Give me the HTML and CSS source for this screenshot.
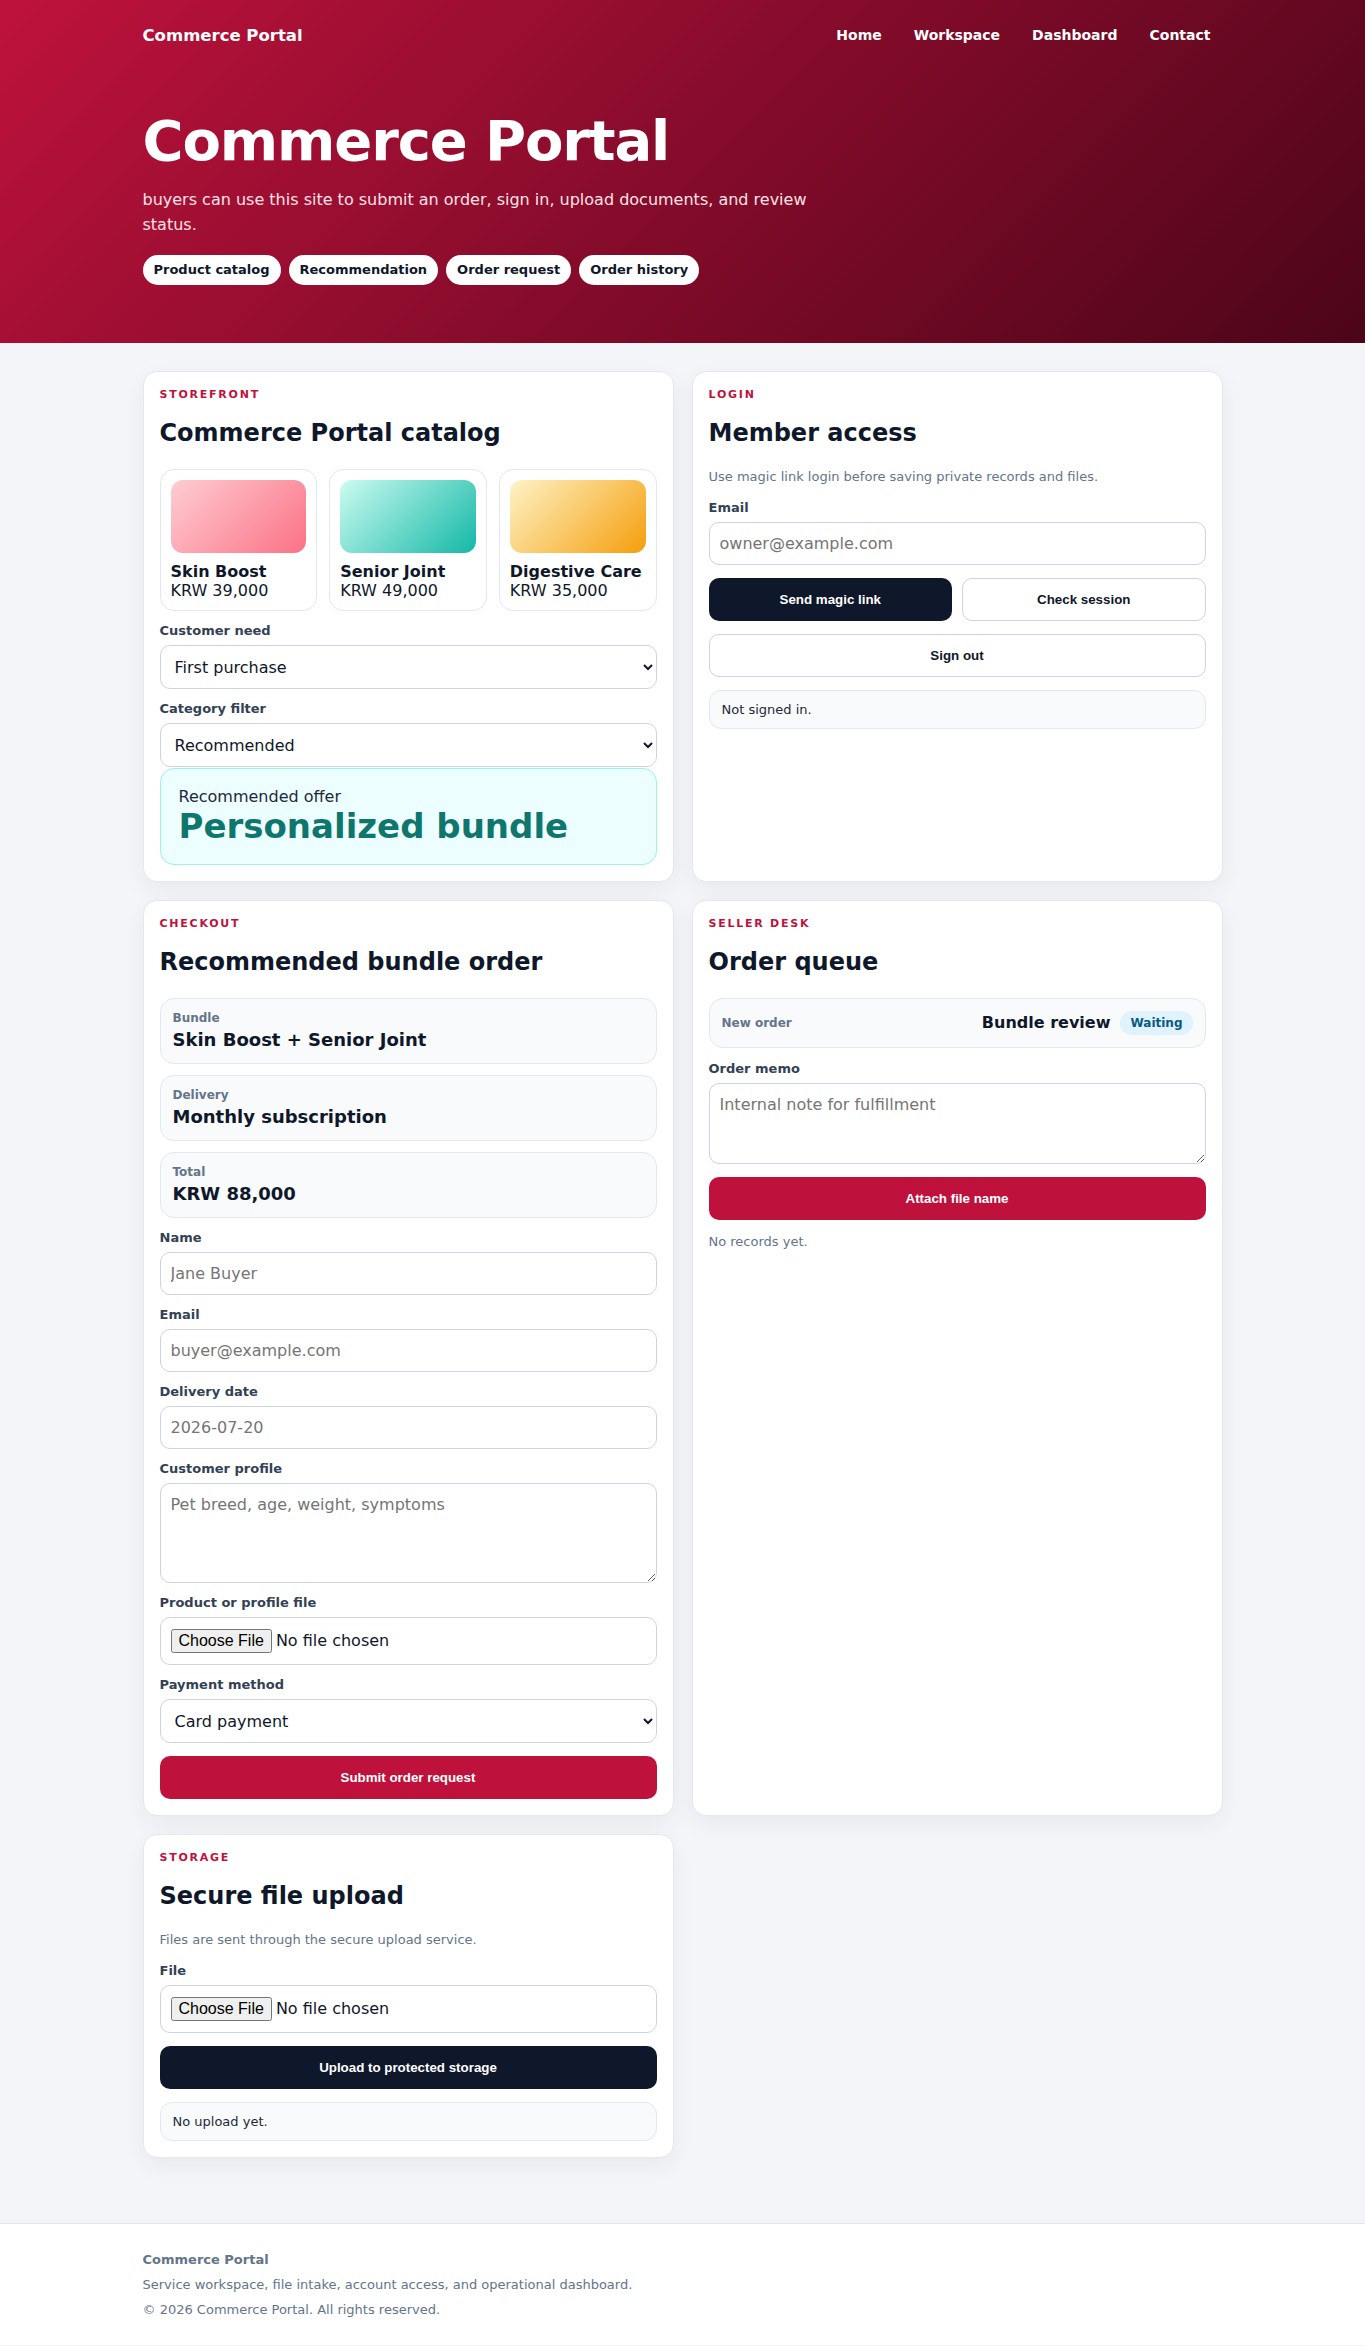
FILE: index.html
```html
<!DOCTYPE html>
<html lang="en">
<head>
    <meta charset="UTF-8">
    <meta name="viewport" content="width=device-width, initial-scale=1.0">
    <title>Commerce Portal</title>
    <link rel="stylesheet" href="styles.css">
</head>
<body>
    <header class="site-header">
        <div class="wrap topbar">
            <a class="brand" href="#">Commerce Portal</a>
            <nav class="nav">
                <a href="#">Home</a>
                <a href="#">Workspace</a>
                <a href="#">Dashboard</a>
                <a href="#">Contact</a>
            </nav>
        </div>
        <div class="wrap hero">
            <h1>Commerce Portal</h1>
            <p class="lead">buyers can use this site to submit an order, sign in, upload documents, and review status.</p>
            <div class="chips">
                <span class="chip">Product catalog</span>
                <span class="chip">Recommendation</span>
                <span class="chip">Order request</span>
                <span class="chip">Order history</span>
            </div>
        </div>
    </header>

    <main class="wrap grid">
        <!-- catalog -->
        <section class="card">
            <p class="eyebrow">Storefront</p>
            <h2>Commerce Portal catalog</h2>
            <div class="products">
                <div class="product">
                    <div class="swatch swatch-rose"></div>
                    <strong>Skin Boost</strong>
                    <span>KRW 39,000</span>
                </div>
                <div class="product">
                    <div class="swatch swatch-teal"></div>
                    <strong>Senior Joint</strong>
                    <span>KRW 49,000</span>
                </div>
                <div class="product">
                    <div class="swatch swatch-amber"></div>
                    <strong>Digestive Care</strong>
                    <span>KRW 35,000</span>
                </div>
            </div>
            <label class="field-label" for="need">Customer need</label>
            <select id="need">
                <option>First purchase</option>
                <option>Repeat order</option>
            </select>
            <label class="field-label" for="category">Category filter</label>
            <select id="category">
                <option>Recommended</option>
                <option>All products</option>
            </select>
            <div class="offer">
                <p class="offer-label">Recommended offer</p>
                <p class="offer-name">Personalized bundle</p>
            </div>
        </section>

        <!-- login -->
        <section class="card">
            <p class="eyebrow">Login</p>
            <h2>Member access</h2>
            <p class="hint">Use magic link login before saving private records and files.</p>
            <label class="field-label" for="loginEmail">Email</label>
            <input type="email" id="loginEmail" placeholder="owner@example.com">
            <div class="btn-row">
                <button class="btn btn-dark">Send magic link</button>
                <button class="btn btn-outline">Check session</button>
            </div>
            <button class="btn btn-outline btn-stack">Sign out</button>
            <div class="status">Not signed in.</div>
        </section>

        <!-- checkout -->
        <section class="card">
            <p class="eyebrow">Checkout</p>
            <h2>Recommended bundle order</h2>
            <div class="summary">
                <span>Bundle</span>
                <strong>Skin Boost + Senior Joint</strong>
            </div>
            <div class="summary">
                <span>Delivery</span>
                <strong>Monthly subscription</strong>
            </div>
            <div class="summary">
                <span>Total</span>
                <strong>KRW 88,000</strong>
            </div>
            <label class="field-label" for="buyerName">Name</label>
            <input type="text" id="buyerName" placeholder="Jane Buyer">
            <label class="field-label" for="buyerEmail">Email</label>
            <input type="email" id="buyerEmail" placeholder="buyer@example.com">
            <label class="field-label" for="deliveryDate">Delivery date</label>
            <input type="text" id="deliveryDate" placeholder="2026-07-20">
            <label class="field-label" for="profile">Customer profile</label>
            <textarea id="profile" rows="4" placeholder="Pet breed, age, weight, symptoms"></textarea>
            <label class="field-label" for="orderFile">Product or profile file</label>
            <input type="file" id="orderFile">
            <label class="field-label" for="payment">Payment method</label>
            <select id="payment">
                <option>Card payment</option>
                <option>Bank transfer</option>
            </select>
            <button class="btn btn-primary btn-stack">Submit order request</button>
        </section>

        <!-- seller -->
        <section class="card">
            <p class="eyebrow">Seller desk</p>
            <h2>Order queue</h2>
            <div class="queue-item">
                <span class="queue-type">New order</span>
                <div class="queue-info">
                    <strong>Bundle review</strong>
                    <span class="badge">Waiting</span>
                </div>
            </div>
            <label class="field-label" for="memo">Order memo</label>
            <textarea id="memo" rows="3" placeholder="Internal note for fulfillment"></textarea>
            <button class="btn btn-primary btn-stack">Attach file name</button>
            <p class="note">No records yet.</p>
        </section>

        <!-- storage -->
        <section class="card">
            <p class="eyebrow">Storage</p>
            <h2>Secure file upload</h2>
            <p class="hint">Files are sent through the secure upload service.</p>
            <label class="field-label" for="storeFile">File</label>
            <input type="file" id="storeFile">
            <button class="btn btn-dark btn-stack">Upload to protected storage</button>
            <div class="status">No upload yet.</div>
        </section>
    </main>

    <footer class="site-footer">
        <div class="wrap">
            <p class="footer-name">Commerce Portal</p>
            <p>Service workspace, file intake, account access, and operational dashboard.</p>
            <p>&copy; 2026 Commerce Portal. All rights reserved.</p>
        </div>
    </footer>
</body>
</html>
```

FILE: styles.css
```css
body {
    margin: 0;
    font-family: "DejaVu Sans", "Noto Sans", sans-serif;
    font-size: 16px;
    color: #0f172a;
    background: #f3f5f8;
}
.wrap {
    max-width: 1080px;
    margin: 0 auto;
}

/* header */
.site-header {
    background: linear-gradient(135deg, #be123c 0%, #4c0519 100%);
    color: #fff;
}
.topbar {
    display: flex;
    align-items: center;
    justify-content: space-between;
    padding: 19px 0 18px;
}
.brand {
    color: #fff;
    text-decoration: none;
    font-weight: 700;
    font-size: 16.5px;
}
.nav {
    display: flex;
    gap: 8px;
}
.nav a {
    color: #fff;
    text-decoration: none;
    font-weight: 700;
    font-size: 14px;
    padding: 8px 12px;
}
.hero {
    padding: 41px 0 58px;
}
.hero h1 {
    margin: 0;
    font-size: 56px;
    line-height: 1.1;
    letter-spacing: -0.02em;
}
.lead {
    max-width: 680px;
    margin: 15px 0 17px;
    line-height: 1.6;
    color: #fde2e7;
}
.chips {
    display: flex;
    gap: 8px;
}
.chip {
    background: #fff;
    color: #0f172a;
    font-size: 13px;
    font-weight: 700;
    line-height: 16px;
    padding: 7px 11px;
    border-radius: 999px;
}

/* cards */
.grid {
    display: grid;
    grid-template-columns: 1fr 1fr;
    gap: 18px;
    align-items: stretch;
    padding: 28px 0 65px;
}
.card {
    background: #fff;
    border: 1px solid #e2e8f0;
    border-radius: 14px;
    padding: 16px;
    box-shadow: 0 8px 24px rgba(15, 23, 42, 0.05);
}
.eyebrow {
    margin: 0;
    font-size: 11px;
    font-weight: 700;
    letter-spacing: 0.16em;
    text-transform: uppercase;
    color: #be123c;
}
.card h2 {
    margin: 18.5px 0 21.5px;
    font-size: 24px;
}
.hint {
    margin: 0;
    font-size: 13px;
    color: #64748b;
}
.hint + .field-label {
    margin-top: 16px;
}
.note {
    margin: 14px 0 0;
    font-size: 13px;
    color: #64748b;
}

.products {
    display: grid;
    grid-template-columns: repeat(3, 1fr);
    gap: 12px;
}
.product {
    display: flex;
    flex-direction: column;
    border: 1px solid #e2e8f0;
    border-radius: 14px;
    padding: 10px;
}
.swatch {
    height: 73px;
    border-radius: 12px;
    margin-bottom: 9px;
}
.swatch-rose { background: linear-gradient(135deg, #fecdd3, #fb7185); }
.swatch-teal { background: linear-gradient(135deg, #ccfbf1, #14b8a6); }
.swatch-amber { background: linear-gradient(135deg, #fef3c7, #f59e0b); }

/* form controls */
.field-label {
    display: block;
    margin: 12px 0 7px;
    font-size: 13px;
    font-weight: 700;
    color: #334155;
}
input,
select,
textarea {
    display: block;
    width: 100%;
    box-sizing: border-box;
    font: inherit;
    font-size: 16px;
    color: #0f172a;
    background: #fff;
    border: 1px solid #cbd5e1;
    border-radius: 10px;
    padding: 11px 10px;
}
select {
    height: 44px;
}
textarea {
    margin-bottom: 3px;
}

.offer {
    margin-top: 1px;
    padding: 18px;
    background: #ecfeff;
    border: 1px solid #99f6e4;
    border-radius: 14px;
}
.offer p {
    margin: 0;
}
.offer-label {
    color: #1e293b;
}
.offer-name {
    font-size: 34px;
    font-weight: 700;
    color: #0f766e;
}

/* buttons */
.btn {
    display: block;
    width: 100%;
    font-family: "Liberation Sans", Arial, sans-serif;
    font-size: 13.33px;
    font-weight: 700;
    padding: 13px;
    border-radius: 10px;
    border: 1px solid transparent;
    cursor: pointer;
}
.btn-dark {
    background: #0f172a;
    color: #fff;
}
.btn-primary {
    background: #be123c;
    color: #fff;
}
.btn-outline {
    background: #fff;
    border-color: #cbd5e1;
    color: #0f172a;
}
.btn-row {
    display: grid;
    grid-template-columns: 1fr 1fr;
    gap: 10px;
    margin-top: 13px;
}
.btn-stack {
    margin-top: 13px;
}

.status {
    margin-top: 13px;
    padding: 11px 12px;
    background: #f8fafc;
    border: 1px solid #e2e8f0;
    border-radius: 12px;
    font-size: 13px;
    color: #1e293b;
}

/* checkout summary */
.summary {
    display: flex;
    flex-direction: column;
    gap: 4px;
    padding: 12.5px 12px;
    background: #f8fafc;
    border: 1px solid #e2e8f0;
    border-radius: 14px;
    margin-bottom: 11px;
}
.summary span {
    font-size: 12px;
    font-weight: 700;
    color: #64748b;
}
.summary strong {
    font-size: 18px;
}
.summary + .field-label {
    margin-top: 12px;
}

/* seller queue */
.queue-item {
    display: flex;
    align-items: center;
    justify-content: space-between;
    padding: 12px;
    background: #f8fafc;
    border: 1px solid #e2e8f0;
    border-radius: 14px;
}
.queue-item + .field-label {
    margin-top: 13px;
}
.queue-type {
    font-size: 12px;
    font-weight: 700;
    color: #64748b;
}
.queue-info {
    display: flex;
    align-items: center;
    gap: 10px;
}
.badge {
    background: #e0f2fe;
    color: #075985;
    font-size: 12px;
    font-weight: 700;
    padding: 5px 10px;
    border-radius: 999px;
}

/* footer */
.site-footer {
    background: #fff;
    border-top: 1px solid #e2e8f0;
    padding: 23px 0;
}
.site-footer p {
    margin: 0;
    font-size: 13px;
    line-height: 25px;
    color: #64748b;
}
.footer-name {
    font-weight: 700;
}
```
